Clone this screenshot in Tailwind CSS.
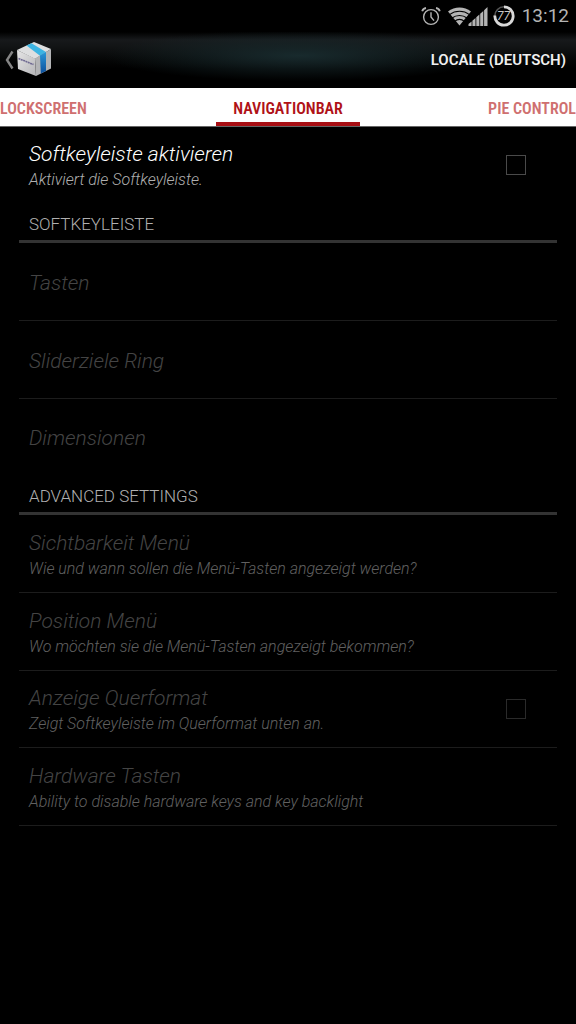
<!DOCTYPE html>
<html lang="de">
<head>
  <meta charset="UTF-8" />
  <meta name="viewport" content="width=device-width, initial-scale=1" />
  <title>Locale (Deutsch) - Navigationbar</title>
  <script src="https://cdn.jsdelivr.net/npm/@tailwindcss/browser@4"></script>
</head>
<body class="min-h-screen bg-black font-['Roboto','Liberation_Sans',sans-serif] text-white">

  <!-- Status Bar -->
  <div class="flex h-8 items-center justify-end bg-black pr-[7px] text-[#b4b4b4]">
    <svg class="h-5 w-5" viewBox="0 0 20 20" fill="none" stroke="currentColor" stroke-width="1.4" aria-label="Alarm">
      <circle cx="10" cy="11" r="7.4" />
      <path d="M10 6.2V11l3 3.6" />
      <path d="M1.2 5.2C1.8 3.4 3.2 2.3 5 2M18.800 5.200C18.200 3.400 16.800 2.300 15 2" stroke-width="1.8" />
    </svg>
    <svg class="ml-[7px] h-[19px] w-[40px]" viewBox="0 0 40 19" aria-label="WLAN und Mobilfunk">
      <!-- wifi wedge, cut by thin arcs -->
      <path d="M0 4.500C6.500 -0.700 16.500 -0.700 23 4.500L11.500 18.500z" fill="currentColor" />
      <g fill="none" stroke="#000" stroke-width="1.1">
        <path d="M1.500 7.600C7.500 3.200 15.500 3.200 21.500 7.600" />
        <path d="M4 11C8.500 7.600 14.500 7.600 19 11" />
        <path d="M6.500 14.400C9.500 12 13.500 12 16.500 14.400" />
      </g>
      <path d="M20.500 19V17L23.600 14.400V19zM24.400 19V13.700L27.500 11V19zM28.300 19V10.200L31.400 7.500V19zM32.200 19V6.800L35.300 4V19zM36.100 19V3.300L39.500 0V19z" fill="currentColor" />
    </svg>
    <svg class="ml-[5px] h-[22px] w-[22px]" viewBox="0 0 22 22" aria-label="Akku 77 Prozent">
      <circle cx="11" cy="11" r="9.200" fill="none" stroke="#555" stroke-width="1.600" />
      <path d="M11 1.800A9.200 9.200 0 1 1 1.800 10.500" fill="none" stroke="#d8d8d8" stroke-width="2.800" />
      <text x="10.500" y="15" text-anchor="middle" font-size="12" font-style="italic" fill="#c8c8c8">77</text>
    </svg>
    <span class="ml-[7px] text-[19px] leading-8">13:12</span>
  </div>

  <!-- Action Bar -->
  <header class="flex h-14 items-center justify-between bg-[radial-gradient(ellipse_34%_46%_at_52%_42%,#182a2d_0%,transparent_100%),linear-gradient(to_bottom,#000_0%,#17191b_14%,#121415_26%,#060707_48%,#000_65%)] pr-[10px] pl-1">
    <button type="button" class="flex items-center" aria-label="Zurück">
      <svg class="h-[20px] w-[10px]" viewBox="0 0 10 20" fill="none" stroke="#858585" stroke-width="2.400">
        <path d="M8.500 1.500L3 10l5.500 8.500" />
      </svg>
      <svg class="ml-[3px] h-9 w-9" viewBox="0 1 36 36">
        <defs>
          <linearGradient id="boxFront" x1="0" y1="0" x2="1" y2="1">
            <stop offset="0" stop-color="#e6e6e6" />
            <stop offset="1" stop-color="#b5b5b8" />
          </linearGradient>
          <linearGradient id="boxRibbon" x1="0" y1="0" x2="0" y2="1">
            <stop offset="0" stop-color="#2a98d8" />
            <stop offset="1" stop-color="#0c4f9c" />
          </linearGradient>
        </defs>
        <path d="M0 9L17 1l17 7-16 10z" fill="#dedfe0" />
        <path d="M0 9l18 8.500L19 35 1 28z" fill="url(#boxFront)" />
        <path d="M18 17.500L34 8v19.500L19 35z" fill="#b3b4b6" />
        <path d="M9.500 4.600L14.500 2.200 29 11l-6 3.700z" fill="#3cb4e2" />
        <path d="M23 14.600l6-3.600v19l-5.200 2.600z" fill="url(#boxRibbon)" />
        <path d="M1.500 17.500l15 6" stroke="#6f6a92" stroke-width="1.600" stroke-dasharray="2 .5" />
      </svg>
    </button>
    <h1 class="text-[15px] leading-5 font-semibold text-[#f0f0f0]">LOCALE (DEUTSCH)</h1>
  </header>

  <!-- Tabs -->
  <nav class="flex h-[39px] items-stretch justify-between border-b border-[#666] bg-white font-['Roboto_Condensed','Roboto',sans-serif] text-[16px] leading-[42px] font-semibold whitespace-nowrap text-[#cf7070]">
    <a href="#lockscreen" class="flex-1">LOCKSCREEN</a>
    <a href="#navigationbar" class="w-1/4 border-b-4 border-[#a80f14] text-center text-[#b01217]" aria-current="page">NAVIGATIONBAR</a>
    <a href="#piecontrol" class="flex-1 text-right">PIE CONTROL</a>
  </nav>

  <!-- Preferences -->
  <main class="px-[19px] font-light">
    <label class="flex h-[76px] cursor-pointer items-center justify-between pr-[31px] pl-[10px]">
      <span class="pt-[2px] italic">
        <span class="block text-[21px] leading-7">Softkeyleiste aktivieren</span>
        <span class="block text-[16px] leading-6 text-[#b0b0b0]">Aktiviert die Softkeyleiste.</span>
      </span>
      <input type="checkbox" class="h-5 w-5 appearance-none border border-[#4a4a4a] checked:bg-[#a80f14]" />
    </label>

    <h2 class="h-10 border-b-3 border-[#333] px-[10px] pt-[2px] text-[17px] leading-[38px] text-[#b0b0b0]">SOFTKEYLEISTE</h2>
    <button type="button" disabled class="block h-[78px] w-full border-b border-[#1c1c1c] px-[10px] pt-[2px] text-left text-[21px] leading-7 text-[#444] italic">Tasten</button>
    <button type="button" disabled class="block h-[78px] w-full border-b border-[#1c1c1c] px-[10px] pt-[2px] text-left text-[21px] leading-7 text-[#444] italic">Sliderziele Ring</button>
    <button type="button" disabled class="block h-[76px] w-full px-[10px] pt-[2px] text-left text-[21px] leading-7 text-[#444] italic">Dimensionen</button>

    <h2 class="h-10 border-b-3 border-[#333] px-[10px] pt-[2px] text-[17px] leading-[38px] text-[#b0b0b0]">ADVANCED SETTINGS</h2>
    <button type="button" disabled class="block h-[78px] w-full border-b border-[#1c1c1c] px-[10px] pt-[2px] text-left italic">
      <span class="block text-[21px] leading-7 text-[#444]">Sichtbarkeit Menü</span>
      <span class="block text-[16px] leading-6 text-[#606060]">Wie und wann sollen die Menü-Tasten angezeigt werden?</span>
    </button>
    <button type="button" disabled class="block h-[78px] w-full border-b border-[#1c1c1c] px-[10px] pt-[2px] text-left italic">
      <span class="block text-[21px] leading-7 text-[#444]">Position Menü</span>
      <span class="block text-[16px] leading-6 text-[#606060]">Wo möchten sie die Menü-Tasten angezeigt bekommen?</span>
    </button>
    <label class="flex h-[77px] items-center justify-between border-b border-[#1c1c1c] pr-[31px] pl-[10px]">
      <span class="pt-[2px] italic">
        <span class="block text-[21px] leading-7 text-[#444]">Anzeige Querformat</span>
        <span class="block text-[16px] leading-6 text-[#606060]">Zeigt Softkeyleiste im Querformat unten an.</span>
      </span>
      <input type="checkbox" disabled class="h-5 w-5 appearance-none border border-[#2a2a2a]" />
    </label>
    <button type="button" disabled class="block h-[78px] w-full border-b border-[#1c1c1c] px-[10px] pt-[2px] text-left italic">
      <span class="block text-[21px] leading-7 text-[#444]">Hardware Tasten</span>
      <span class="block text-[16px] leading-6 text-[#606060]">Ability to disable hardware keys and key backlight</span>
    </button>
  </main>

</body>
</html>
